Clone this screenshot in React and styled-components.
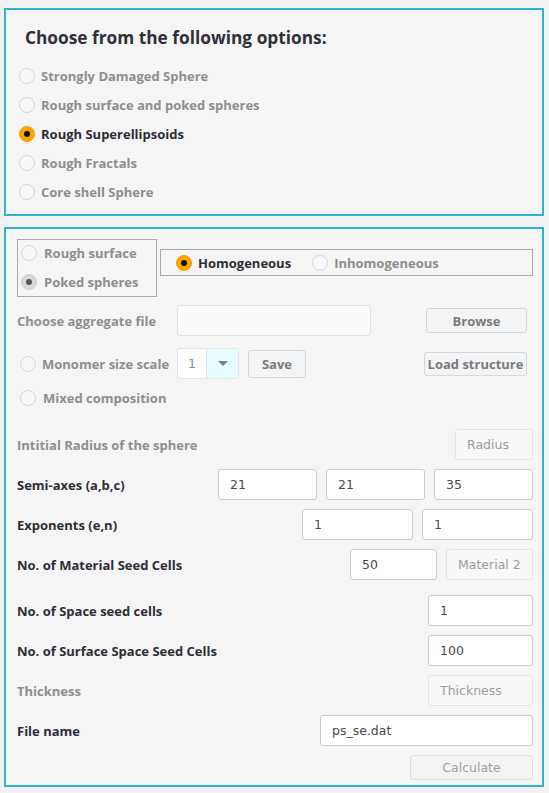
import React from 'react';
import styled, { createGlobalStyle } from 'styled-components';

const GlobalStyle = createGlobalStyle`
  body {
    margin: 0;
    background: #f1f1f1;
    font-family: "Open Sans", "DejaVu Sans", sans-serif;
  }
`;

const shapes = [
  { label: 'Strongly Damaged Sphere' },
  { label: 'Rough surface and poked spheres' },
  { label: 'Rough Superellipsoids', checked: true },
  { label: 'Rough Fractals' },
  { label: 'Core shell Sphere' },
];

const App = () => {
  return (
    <>
      <GlobalStyle />
      <Page>
        <Panel>
          <Title>Choose from the following options:</Title>
          <OptionList>
            {shapes.map((s) => (
              <Choice key={s.label} $gap={6}>
                <Radio $state={s.checked ? 'on' : 'off'} />
                <ChoiceText $active={s.checked}>{s.label}</ChoiceText>
              </Choice>
            ))}
          </OptionList>
        </Panel>

        <Panel $form>
          <TopRow>
            <GroupBox>
              <Choice $gap={7}>
                <Radio $state="off" />
                <ChoiceText>Rough surface</ChoiceText>
              </Choice>
              <Choice $gap={7}>
                <Radio $state="locked" />
                <ChoiceText>Poked spheres</ChoiceText>
              </Choice>
            </GroupBox>
            <InlineBox>
              <Choice $gap={6}>
                <Radio $state="on" />
                <ChoiceText $active>Homogeneous</ChoiceText>
              </Choice>
              <Choice $gap={6}>
                <Radio $state="off" />
                <ChoiceText>Inhomogeneous</ChoiceText>
              </Choice>
            </InlineBox>
          </TopRow>

          <ToolRow $top={8}>
            <LeadCell>
              <FieldLabel $muted>Choose aggregate file</FieldLabel>
            </LeadCell>
            <FileBox />
            <Button $w={101}>Browse</Button>
          </ToolRow>

          <ToolRow $top={12}>
            <LeadCell $indent={3}>
              <Choice $gap={6}>
                <Radio $state="off" />
                <ChoiceText>Monomer size scale</ChoiceText>
              </Choice>
            </LeadCell>
            <Combo>
              <ComboValue>1</ComboValue>
              <ComboArrow>
                <svg width="10" height="6" viewBox="0 0 10 6">
                  <path d="M0 0 H10 L5 5 Z" fill="#7d7d7d" />
                </svg>
              </ComboArrow>
            </Combo>
            <Button $w={58} $h={28} style={{ marginLeft: 9 }}>Save</Button>
            <Button $w={103} $h={24}>Load structure</Button>
          </ToolRow>

          <MixedRow>
            <Choice $gap={7}>
              <Radio $state="off" />
              <ChoiceText>Mixed composition</ChoiceText>
            </Choice>
          </MixedRow>

          <Fields>
            <FormRow>
              <FieldLabel $muted>Intitial Radius of the sphere</FieldLabel>
              <Controls>
                <Field $w={78} disabled placeholder="Radius" />
              </Controls>
            </FormRow>
            <FormRow>
              <FieldLabel>Semi-axes (a,b,c)</FieldLabel>
              <Controls>
                <Field $w={99} defaultValue="21" />
                <Field $w={99} defaultValue="21" />
                <Field $w={99} defaultValue="35" />
              </Controls>
            </FormRow>
            <FormRow>
              <FieldLabel>Exponents (e,n)</FieldLabel>
              <Controls>
                <Field $w={111} defaultValue="1" />
                <Field $w={111} defaultValue="1" />
              </Controls>
            </FormRow>
            <FormRow>
              <FieldLabel>No. of Material Seed Cells</FieldLabel>
              <Controls>
                <Field $w={87} defaultValue="50" />
                <Field $w={87} disabled placeholder="Material 2" />
              </Controls>
            </FormRow>
            <FormRow $top={6}>
              <FieldLabel>No. of Space seed cells</FieldLabel>
              <Controls>
                <Field $w={105} defaultValue="1" />
              </Controls>
            </FormRow>
            <FormRow>
              <FieldLabel>No. of Surface Space Seed Cells</FieldLabel>
              <Controls>
                <Field $w={105} defaultValue="100" />
              </Controls>
            </FormRow>
            <FormRow>
              <FieldLabel $muted>Thickness</FieldLabel>
              <Controls>
                <Field $w={105} disabled placeholder="Thickness" />
              </Controls>
            </FormRow>
            <FormRow>
              <FieldLabel>File name</FieldLabel>
              <Controls>
                <Field $w={213} defaultValue="ps_se.dat" />
              </Controls>
            </FormRow>
            <ActionRow>
              <CalcButton disabled>Calculate</CalcButton>
            </ActionRow>
          </Fields>
        </Panel>
      </Page>
    </>
  );
};

export default App;

const Page = styled.div`
  display: flex;
  flex-direction: column;
  gap: 11px;
  width: 540px;
  padding: 8px 0 7px 4px;
`;

const Panel = styled.section`
  border: 2px solid #2cb6cf;
  background: #f5f5f5;
  padding: ${(p) => (p.$form ? '10px 9px 5px 11px' : '16px 0 12px 13px')};
`;

const Title = styled.h2`
  margin: 0 0 16px 6px;
  font-size: 17.3px;
  line-height: 24px;
  font-weight: 700;
  color: #30303a;
`;

const OptionList = styled.div`
  display: flex;
  flex-direction: column;
  gap: 9px;
`;

const Choice = styled.label`
  display: flex;
  align-items: center;
  gap: ${(p) => p.$gap}px;
  height: 20px;
`;

const radioLook = {
  off: 'background: #f7f7f7; border-color: #d6d6d6;',
  on: 'background: #ffa600; border-color: #f39c00;',
  locked: 'background: #d8d8d8; border-color: #cdcdcd;',
};

const Radio = styled.span`
  position: relative;
  width: 16px;
  height: 16px;
  flex: none;
  box-sizing: border-box;
  border: 1px solid;
  border-radius: 50%;
  ${(p) => radioLook[p.$state]}

  &::after {
    content: '';
    display: ${(p) => (p.$state === 'off' ? 'none' : 'block')};
    position: absolute;
    left: 4px;
    top: 4px;
    width: 6px;
    height: 6px;
    border-radius: 50%;
    background: ${(p) => (p.$state === 'on' ? '#111' : '#555')};
  }
`;

const ChoiceText = styled.span`
  font-size: 13px;
  font-weight: 700;
  color: ${(p) => (p.$active ? '#2d2d37' : '#8e8e8e')};
  white-space: nowrap;
`;

const TopRow = styled.div`
  display: flex;
  align-items: flex-start;
  gap: 3px;
`;

const GroupBox = styled.div`
  box-sizing: border-box;
  width: 140px;
  height: 58px;
  border: 1px solid #a9a9a9;
  padding: 3px 0 0 3px;
  display: flex;
  flex-direction: column;
  gap: 9px;
`;

const InlineBox = styled.div`
  flex: 1;
  box-sizing: border-box;
  height: 27px;
  margin-top: 10px;
  border: 1px solid #a9a9a9;
  padding: 0 0 0 15px;
  display: flex;
  align-items: center;
  gap: 21px;
`;

const ToolRow = styled.div`
  display: flex;
  align-items: center;
  height: 31px;
  margin-top: ${(p) => p.$top}px;
  padding-right: 6px;

  & > button:last-child {
    margin-left: auto;
  }
`;

const LeadCell = styled.div`
  box-sizing: border-box;
  width: 160px;
  flex: none;
  display: flex;
  align-items: center;
  padding-left: ${(p) => p.$indent || 0}px;
`;

const FieldLabel = styled.span`
  font-size: 13px;
  font-weight: 700;
  color: ${(p) => (p.$muted ? '#8e8e8e' : '#2d2d37')};
  white-space: nowrap;
`;

const FileBox = styled.div`
  box-sizing: border-box;
  width: 194px;
  height: 31px;
  background: #fafafa;
  border: 1px solid #e2e2e2;
  border-radius: 3px;
`;

const Button = styled.button`
  box-sizing: border-box;
  width: ${(p) => p.$w}px;
  height: ${(p) => p.$h || 25}px;
  padding: 0;
  background: #f3f4f5;
  border: 1px solid #d3d6da;
  border-radius: 3px;
  font-family: inherit;
  font-size: 13px;
  font-weight: 700;
  color: #7b7b7b;
  white-space: nowrap;
`;

const Combo = styled.div`
  box-sizing: border-box;
  display: flex;
  width: 62px;
  height: 31px;
  border: 1px solid #e6e6e6;
  border-radius: 3px;
  overflow: hidden;
  background: #fff;
`;

const ComboValue = styled.span`
  width: 29px;
  padding-left: 10px;
  box-sizing: border-box;
  line-height: 29px;
  font-family: "DejaVu Sans", sans-serif;
  font-size: 12.5px;
  color: #8a8a8a;
  border-right: 1px solid #e4e4e4;
`;

const ComboArrow = styled.span`
  flex: 1;
  display: flex;
  align-items: center;
  justify-content: center;
  background: #e6fbfd;
`;

const MixedRow = styled.div`
  margin-top: 7px;
  padding-left: 3px;
  height: 24px;
  display: flex;
  align-items: center;
`;

const Fields = styled.div`
  display: flex;
  flex-direction: column;
  gap: 9px;
  margin-top: 19px;
`;

const FormRow = styled.div`
  display: flex;
  align-items: center;
  justify-content: space-between;
  height: 31px;
  margin-top: ${(p) => p.$top || 0}px;
`;

const Controls = styled.div`
  display: flex;
  gap: 9px;
`;

const Field = styled.input`
  box-sizing: border-box;
  width: ${(p) => p.$w}px;
  height: 31px;
  padding: 0 11px;
  background: ${(p) => (p.disabled ? '#f8f8f8' : '#fff')};
  border: 1px solid ${(p) => (p.disabled ? '#e3e3e3' : '#c8cbd0')};
  border-radius: 3px;
  font-family: "DejaVu Sans", sans-serif;
  font-size: 12.5px;
  color: #4a4a4a;

  &::placeholder {
    color: #9c9c9c;
  }
`;

const ActionRow = styled.div`
  display: flex;
  justify-content: flex-end;
`;

const CalcButton = styled.button`
  box-sizing: border-box;
  width: 123px;
  height: 25px;
  background: #f3f3f3;
  border: 1px solid #dddddd;
  border-radius: 3px;
  font-family: "DejaVu Sans", sans-serif;
  font-size: 12.5px;
  color: #a0a0a0;
`;
